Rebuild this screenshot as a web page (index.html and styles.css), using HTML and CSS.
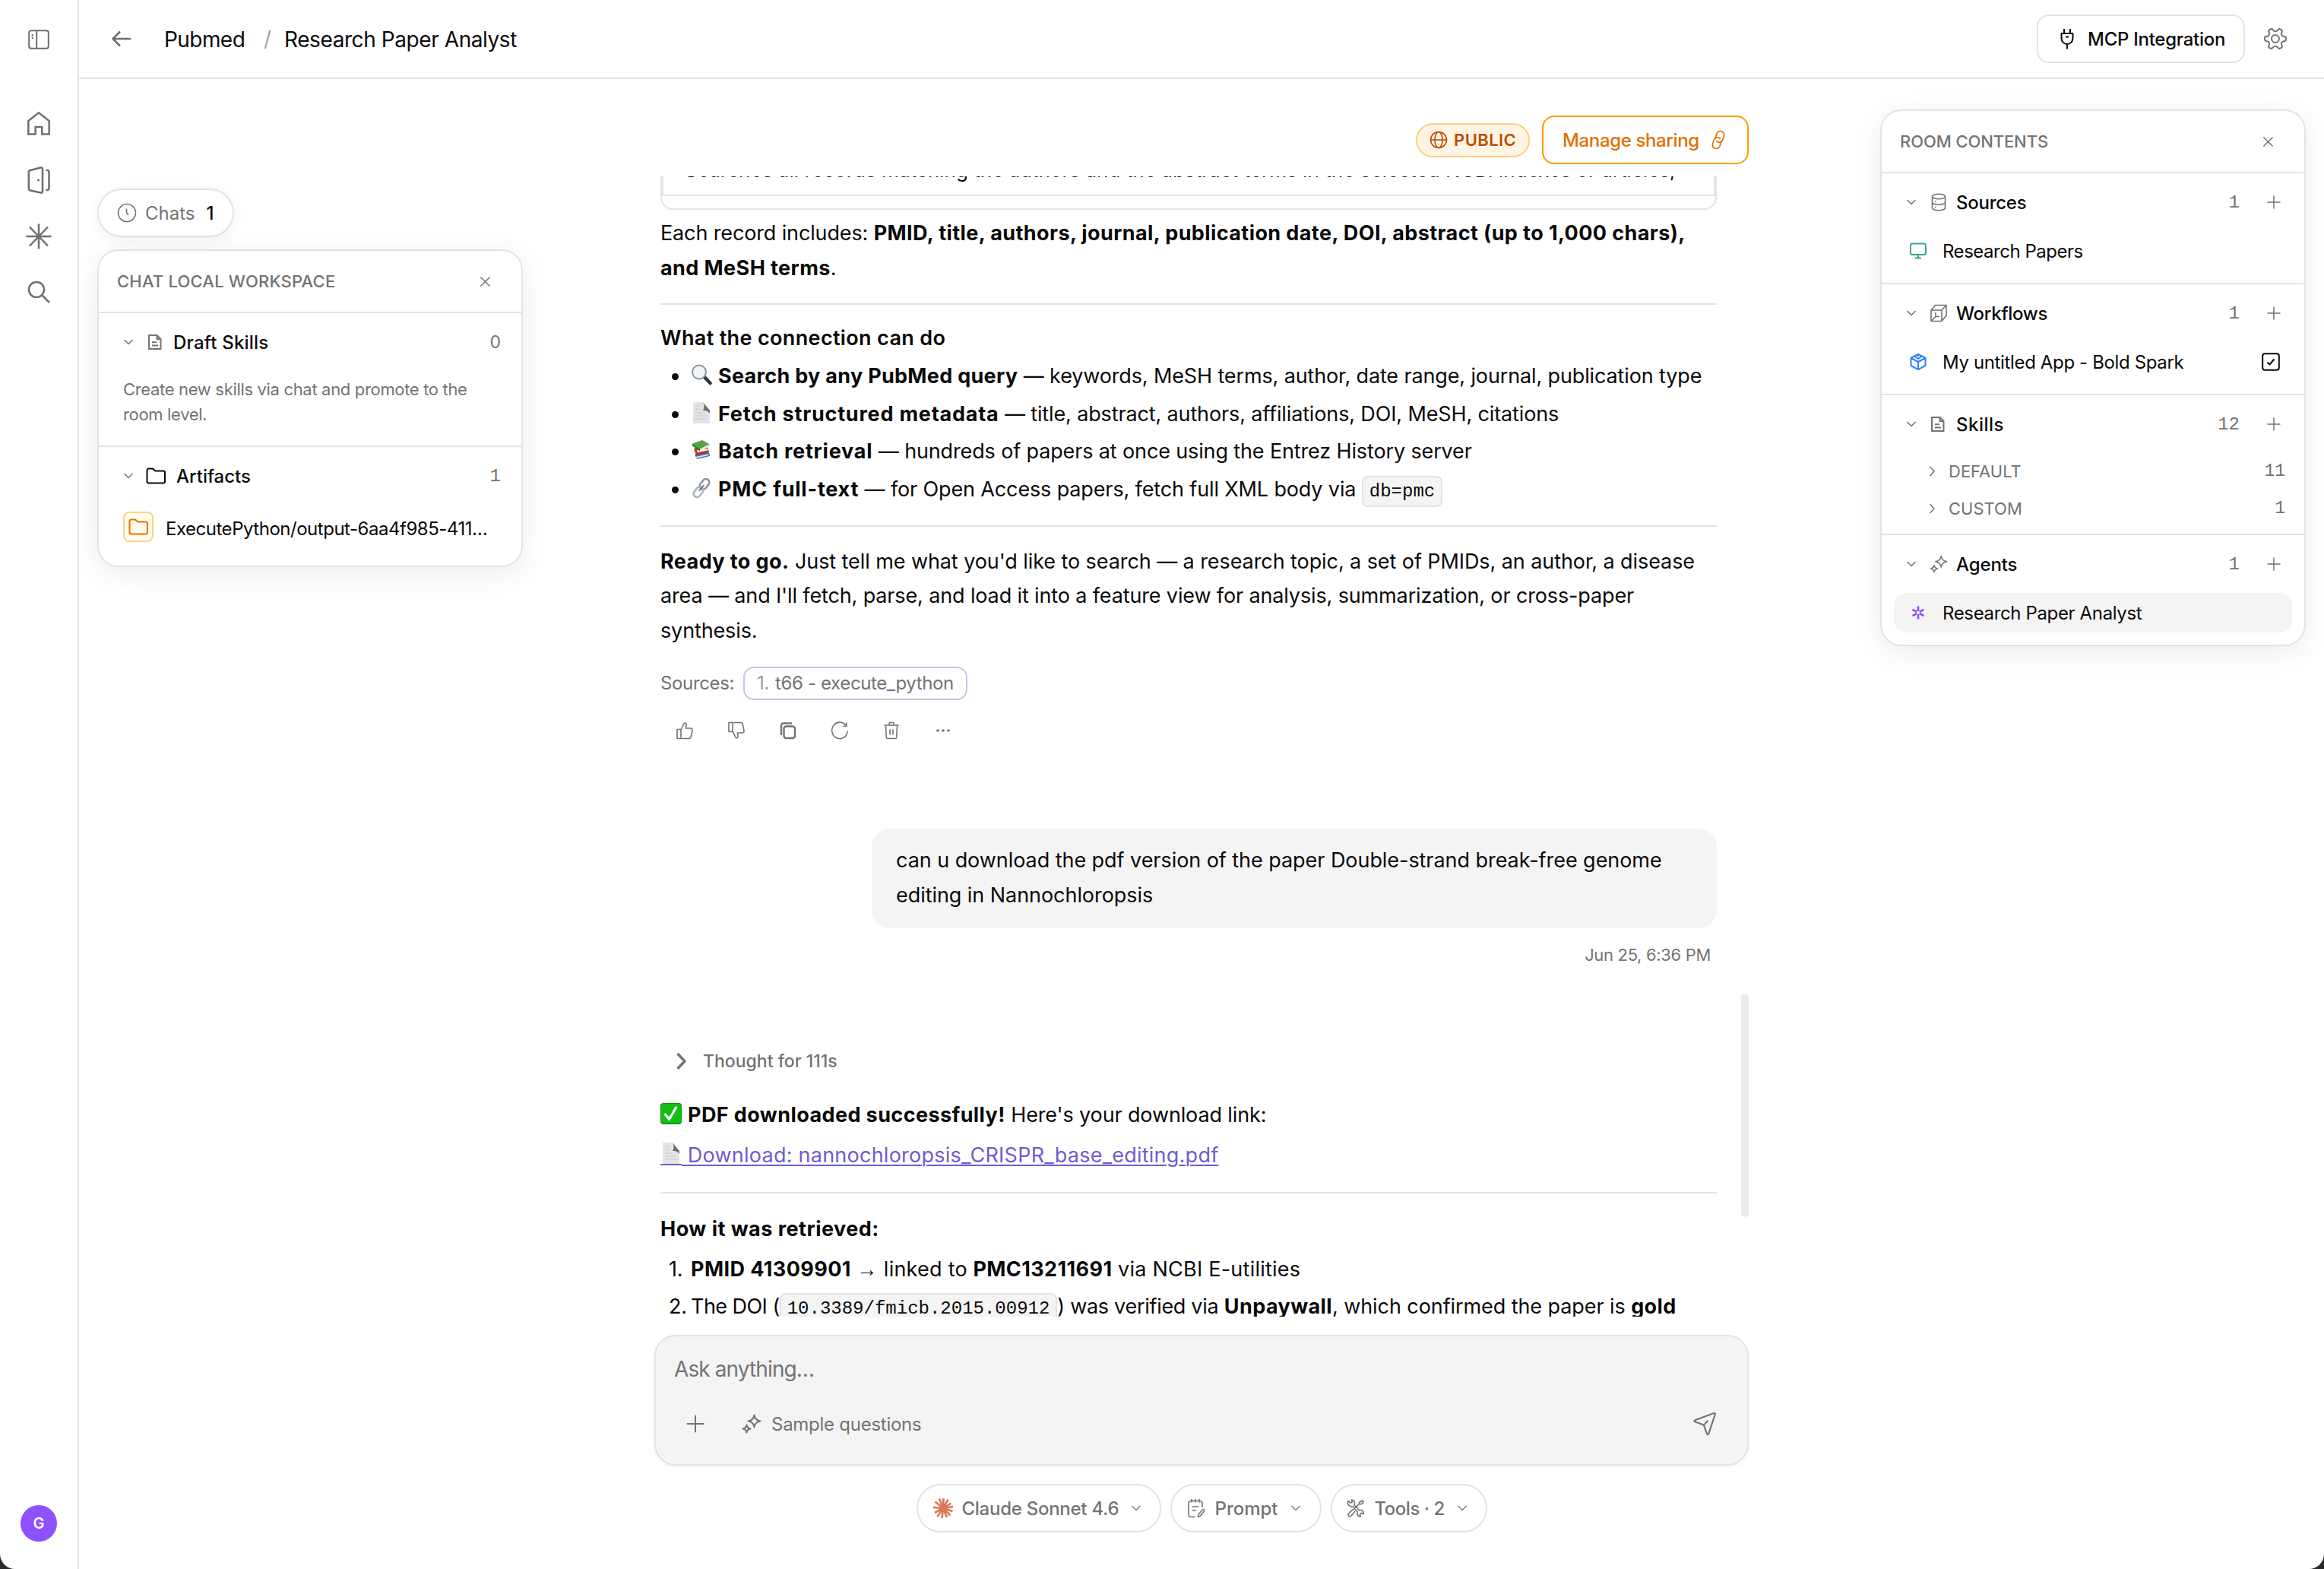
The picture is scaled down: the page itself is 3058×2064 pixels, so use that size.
FILE: index.html
```html
<!DOCTYPE html>
<html lang="en">
<head>
<meta charset="utf-8">
<title>Research Paper Analyst</title>
<link rel="stylesheet" href="styles.css">
</head>
<body>
<svg class="defs" aria-hidden="true">
  <symbol id="down" viewBox="0 0 16 16"><path d="M2.500 5l5.500 5.500L13.500 5" /></symbol>
  <symbol id="right" viewBox="0 0 16 16"><path d="M5.500 2L11 8l-5.500 6" /></symbol>
  <symbol id="close" viewBox="0 0 16 16"><path d="M1.500 1.500l13 13M14.500 1.500l-13 13" /></symbol>
  <symbol id="plus" viewBox="0 0 18 18"><path d="M9 0.500v17M0.500 9h17" /></symbol>
  <symbol id="doc" viewBox="0 0 20 22"><path d="M2 2h10.500l5 5v13H2zM12.500 2v5h5M6 11.200h6M6 15.500h8" /></symbol>
  <symbol id="folder" viewBox="0 0 28 24"><path d="M2.500 19.500V4.500a2 2 0 0 1 2-2h5.500l3.500 3h10.500a2 2 0 0 1 2 2v12a2 2 0 0 1-2 2h-19.500a2 2 0 0 1-2-2z" /></symbol>
  <symbol id="stars" viewBox="0 0 26 26"><path d="M16.500 1.500c.8 5 3 7.200 8 8-5 .8-7.200 3-8 8-.8-5-3-7.200-8-8 5-.8 7.200-3 8-8zM6.500 14.500c.5 3 2 4.500 5 5-3 .5-4.500 2-5 5-.5-3-2-4.500-5-5 3-.5 4.500-2 5-5z" /></symbol>
  <symbol id="page" viewBox="0 0 28 28"><path d="M3 0h13l9 12v16H3z" fill="#e4e4e4"/><path d="M16 0c2 3 2 7 0 11 3 0 7 .5 9 4V11z" fill="#6f6f6f"/><path d="M6 5h6M6 9h7M6 14h9M6 18h15M6 22h15" stroke="#c8c8c8" stroke-width="1.200"/></symbol>
</svg>
<div class="app">
  <aside class="rail">
    <nav class="rail-nav">
      <svg class="ri panel-ic" viewBox="0 0 32 32"><rect x="3.200" y="4.200" width="25.600" height="23.600" rx="3"/><path d="M13.200 4v24M7.700 9v2.500M7.700 12.800v2.500"/></svg>
      <svg class="ri home-ic" viewBox="0 0 32 32"><path d="M2.300 30.500V13L16 2.300 29.700 13v17.500H20.300V21h-8.600v9.500z"/></svg>
      <svg class="ri door-ic" viewBox="0 0 32 36"><path d="M4.800 5L18.500 1.500q2.500-.5 2.500 2v29q0 2.500-2.500 2L4.800 31.500q-2-.5-2-2.500V7.500q0-2 2-2.500zM25.500 5h1.500q2.500 0 2.500 2.500v21q0 2.500-2.500 2.500h-1.500"/><circle cx="15.500" cy="18" r="1.600" class="dot"/></svg>
      <svg class="ri star-ic" viewBox="0 0 36 36"><path d="M18 1.500v33M1.500 18h33M6 5.500l24 25M30 5.500l-24 25"/></svg>
      <svg class="ri find-ic" viewBox="0 0 32 32"><circle cx="13" cy="13" r="10"/><path d="M20.500 20.500l9.500 9.500"/></svg>
    </nav>
    <div class="avatar">G</div>
  </aside>
  <div class="main">
    <header class="top">
      <svg class="back" viewBox="0 0 28 24"><path d="M26 12H3M12 2.500L2.500 12l9.500 9.500"/></svg>
      <span class="crumb c1 n4">Pubmed</span><span class="slash">/</span><span class="crumb c2 n3">Research Paper Analyst</span>
      <button class="mcp"><svg viewBox="0 0 20 28"><path d="M6 1v6M14 1v6M2.500 7h15v6c0 5-3.500 8-7.500 8s-7.500-3-7.500-8zM10 21v6.500M8 11.500h4"/></svg><span class="n2">MCP Integration</span></button>
      <svg class="gear" viewBox="0 0 24 24"><g transform="rotate(90 12 12)"><path d="M12.220 2h-.44a2 2 0 0 0-2 2v.18a2 2 0 0 1-1 1.730l-.43.25a2 2 0 0 1-2 0l-.15-.08a2 2 0 0 0-2.730.73l-.22.38a2 2 0 0 0 .73 2.730l.15.1a2 2 0 0 1 1 1.720v.51a2 2 0 0 1-1 1.740l-.15.09a2 2 0 0 0-.73 2.730l.22.38a2 2 0 0 0 2.730.73l.15-.08a2 2 0 0 1 2 0l.43.25a2 2 0 0 1 1 1.730V20a2 2 0 0 0 2 2h.44a2 2 0 0 0 2-2v-.18a2 2 0 0 1 1-1.730l.43-.25a2 2 0 0 1 2 0l.15.08a2 2 0 0 0 2.730-.73l.22-.39a2 2 0 0 0-.73-2.730l-.15-.08a2 2 0 0 1-1-1.740v-.5a2 2 0 0 1 1-1.740l.15-.09a2 2 0 0 0 .73-2.730l-.22-.38a2 2 0 0 0-2.730-.73l-.15.08a2 2 0 0 1-2 0l-.43-.25a2 2 0 0 1-1-1.730V4a2 2 0 0 0-2-2z"/><circle cx="12" cy="12" r="3.500"/></g></svg>
    </header>
    <div class="body">
      <section class="left">
        <div class="chats"><svg viewBox="0 0 26 26"><circle cx="13" cy="13" r="11.500"/><path d="M12.500 7.500V13l2.500 3"/></svg><span class="lbl">Chats</span><b>1</b></div>
        <div class="card">
          <div class="card-h"><span class="w1">CHAT LOCAL WORKSPACE</span><svg class="x"><use href="#close"/></svg></div>
          <div class="sec drafts">
            <div class="row"><svg class="chev"><use href="#down"/></svg><svg class="doc"><use href="#doc"/></svg><span class="rt w1">Draft Skills</span><span class="num zero">0</span></div>
            <p class="hint n3">Create new skills via chat and promote to the<br>room level.</p>
          </div>
          <div class="sec">
            <div class="row"><svg class="chev"><use href="#down"/></svg><svg class="fold"><use href="#folder"/></svg><span class="rt">Artifacts</span><span class="num">1</span></div>
            <div class="file"><span class="tile"><svg><use href="#folder"/></svg></span><span class="fname n4">ExecutePython/output-6aa4f985-411…</span></div>
          </div>
        </div>
      </section>
      <section class="chat">
        <div class="share">
          <span class="public"><svg viewBox="0 0 24 24"><circle cx="12" cy="12" r="10.500"/><ellipse cx="12" cy="12" rx="5" ry="10.500"/><path d="M1.500 12h21"/></svg><span class="w2">PUBLIC</span></span>
          <button class="manage"><span class="n3">Manage sharing</span><svg viewBox="0 0 22 28"><g transform="rotate(18 11 14)"><path d="M7 14.500a5 5 0 0 1-.5-2.500V7a5 5 0 0 1 10 0v5a5 5 0 0 1-5 5q-1.800 0-2.500-1.500"/><path d="M15 13.500q.5 1 .5 2.500v5a5 5 0 0 1-10 0v-5a5 5 0 0 1 5-5q1.800 0 2.500 1.500"/></g></svg></button>
        </div>
        <div class="viewport">
          <div class="thread">
            <div class="table"><div class="cell"><span>Searches all records matching the authors and the abstract terms in the selected NCBI indexes or articles,</span></div></div>
            <p class="p p1">Each record includes: <b>PMID, title, authors, journal, publication date, DOI, abstract (up to 1,000 chars),</b><br><b>and MeSH terms</b>.</p>
            <hr>
            <h3 class="p h what">What the connection can do</h3>
            <ul>
              <li><svg class="emo" viewBox="0 0 28 28"><path d="M18 17l7.500 8" stroke="#333" stroke-width="4.500" stroke-linecap="round"/><circle cx="11" cy="10.500" r="9" fill="#eef3f7" stroke="#8e949b" stroke-width="2"/></svg><b class="tight">Search by any PubMed query</b> — keywords, MeSH terms, author, date range, journal, publication type</li>
              <li><svg class="emo"><use href="#page"/></svg><b>Fetch structured metadata</b> — title, abstract, authors, affiliations, DOI, MeSH, citations</li>
              <li><svg class="emo" viewBox="0 0 28 28"><path d="M5 20l19-3 1 5-17 4z" fill="#3c6fb5"/><path d="M6 23l17-3.500 .5 1.500-16 3.500z" fill="#eee"/><path d="M4 12l18-2 2 7-17 4z" fill="#c8281e"/><path d="M8 14l14-2 .5 2.500-14 3z" fill="#f3e9e6"/><path d="M2 5.500L15 1l10 5.500-13 6z" fill="#53a548"/><path d="M2 5.500l10 7v3l-10-7z" fill="#2f7a2c"/><path d="M12 12.500l13-6v2.500l-13 6.500z" fill="#e8f0e4"/></svg><b>Batch retrieval</b> — hundreds of papers at once using the Entrez History server</li>
              <li><svg class="emo" viewBox="0 0 28 28"><g transform="rotate(38 14 14)" fill="none"><rect x="9.500" y="0" width="9" height="15" rx="4.500" stroke="#8c949e" stroke-width="2.600"/><rect x="9.500" y="13" width="9" height="15" rx="4.500" stroke="#aab2bc" stroke-width="2.600"/><path d="M14 9v10" stroke="#767d86" stroke-width="2"/></g></svg><b>PMC full-text</b> — for Open Access papers, fetch full XML body via <code>db=pmc</code></li>
            </ul>
            <hr>
            <p class="p p2"><b>Ready to go.</b> <span class="n0">Just tell me what you'd like to search — a research topic, a set of PMIDs, an author, a disease</span><br>area — and I'll fetch, parse, and load it into a feature view for analysis, summarization, or cross-paper<br>synthesis.</p>
            <div class="srcs n3"><span class="sl">Sources:</span><span class="chip"><i>1.</i><span>t66 - execute_python</span></span></div>
            <div class="acts">
              <svg viewBox="0 0 24 24"><path d="M2 10.500h5v12H2zM7 11l4.500-9c2 0 3 1.500 2.500 3.500L13.200 9H20q2.500.3 2 2.800l-1.800 8.700q-.4 2-2.500 2H7"/></svg>
              <svg viewBox="0 0 24 24"><path d="M2 1.500h5v12H2zM7 13l4.500 9c2 0 3-1.500 2.500-3.500L13.200 15H20q2.500-.3 2-2.800l-1.800-8.700q-.4-2-2.500-2H7"/></svg>
              <svg viewBox="0 0 24 24" class="thick"><rect x="6.500" y="6.500" width="14.500" height="15.500" rx="3"/><path d="M3 18V5.500Q3 2.500 6 2.500h11"/></svg>
              <svg viewBox="0 0 24 24"><path d="M20.500 5.800A10.300 10.800 0 1 0 22.300 12.500M20.800 1.500v4.800h-4.300"/></svg>
              <svg viewBox="0 0 24 24"><path d="M2.500 5h19M8.500 5l1-3.500h5L15.500 5M4.500 5l.7 15.500q.1 2 2 2h9.600q1.900 0 2-2L19.500 5M10 10.500v7M14 10.500v7"/></svg>
              <svg viewBox="0 0 24 24" class="dots"><circle cx="5" cy="12" r="1.800"/><circle cx="12" cy="12" r="1.800"/><circle cx="19" cy="12" r="1.800"/></svg>
            </div>
            <div class="bubble">can u download the pdf version of the paper Double-strand break-free genome<br>editing in Nannochloropsis</div>
            <div class="time n3">Jun 25, 6:36 PM</div>
            <div class="thought"><svg viewBox="0 0 16 24"><path d="M2.500 2L12 12l-9.500 10"/></svg><span>Thought for 111s</span></div>
            <p class="p p3"><svg class="emo" viewBox="0 0 28 28"><rect width="28" height="28" rx="4" fill="#0a9a0a"/><rect x="1" y="1" width="26" height="25" rx="3.500" fill="#14bf14"/><path d="M6.500 15l5 6.500L20.500 6" fill="none" stroke="#fff" stroke-width="3.200" stroke-linecap="round" stroke-linejoin="round"/></svg><b>PDF downloaded successfully!</b> Here's your download link:</p>
            <p class="p p4"><a class="w1"><svg class="emo"><use href="#page"/></svg> Download: nannochloropsis_CRISPR_base_editing.pdf</a></p>
            <hr>
            <h3 class="p h how">How it was retrieved:</h3>
            <ol>
              <li><i>1.</i><b>PMID 41309901</b> <span class="arrow">→</span> <span class="w1">linked to</span> <b>PMC13211691</b> <span class="w1">via NCBI E-utilities</span></li>
              <li><i>2.</i><span class="n4">The DOI (</span><code>10.3389/fmicb.2015.00912</code><span class="n2">) was verified via</span> <b>Unpaywall</b><span class="n0">, which confirmed the paper is</span> <b>gold</b></li>
            </ol>
          </div>
          <div class="thumb"></div>
        </div>
        <div class="ask">
          <div class="ph n5">Ask anything…</div>
          <div class="bar"><svg class="add"><use href="#plus"/></svg><svg class="sp"><use href="#stars"/></svg><span class="sq n2">Sample questions</span><svg class="send" viewBox="0 0 30 30"><path d="M3 10.500L26 2q2.500-.7 1.800 1.800L20 27q-1 2.500-2.300.2L14 16.500 3 12.500q-2-1 0-2zM14 16.500l5-5.500"/></svg></div>
        </div>
        <div class="pills">
          <button class="pill k1"><svg class="claude" viewBox="0 0 28 28"><path d="M14 14L14.500 1M14 14L9 1.500M14 14L20.500 2.500M14 14L3.500 5.500M14 14L24.500 7.500M14 14L1 13M14 14L27 12M14 14L3 20M14 14L26.500 18M14 14L6.500 25M14 14L23.500 23.500M14 14L12.500 27M14 14L19 26"/></svg><span class="n2">Claude Sonnet 4.6</span><svg class="chev"><use href="#down"/></svg></button>
          <button class="pill k2"><svg class="note" viewBox="0 0 24 26"><path d="M10.500 24.500H5q-3 0-3-3V6.500q0-3 3-3h12q3 0 3 3V12M6 1v4.500M11 1v4.500M16 1v4.500M6.500 11h9M6.500 16h5.500M14.500 24.500l.3-3 5.500-6.500q1-1 2 0 .8 1-.1 2.200L17 23.500z"/></svg><span>Prompt</span><svg class="chev"><use href="#down"/></svg></button>
          <button class="pill k3"><svg class="tool" viewBox="0 0 24 24"><path d="M1.800 2.500l3.400 2.500 2-1L6.500 1q3.500.3 4 4 0 1.500-.5 2.500L16.500 15q1.500-.8 3-.2 3 1.200 2.700 5l-2.800-1.300-1.900 1.500.8 2.900q-3.800.2-4.500-3.900 0-1 .4-2L8 9.500q-3.500 1-5.500-1.500Q.8 5.500 1.800 2.500zM21.500 1.500l-5 3v2L3 18.500q-2 2-.3 3.800 1.800 1.600 3.500-.5L11 16M17.500 7l3-1 2-3.500M12.500 10.500l4-4.500"/></svg><span class="n4">Tools · 2</span><svg class="chev"><use href="#down"/></svg></button>
        </div>
      </section>
      <section class="rightc">
        <div class="card">
          <div class="card-h"><span class="n1">ROOM CONTENTS</span><svg class="x"><use href="#close"/></svg></div>
          <div class="sec s-a">
            <div class="row"><svg class="chev"><use href="#down"/></svg><svg class="ric" viewBox="0 0 22 24"><ellipse cx="11" cy="4.500" rx="8.500" ry="3.300"/><path d="M2.500 4.500v15c0 1.800 3.800 3.300 8.500 3.300s8.500-1.500 8.500-3.300v-15M2.500 12c0 1.800 3.800 3.300 8.500 3.300s8.500-1.500 8.500-3.300M6 11h1.500M6 18.500h1.500"/></svg><span class="rt n2">Sources</span><span class="num">1</span><svg class="pl"><use href="#plus"/></svg></div>
            <div class="item"><svg class="green" viewBox="0 0 24 24"><rect x="2" y="2.500" width="20" height="14.500" rx="2.500"/><path d="M12 17v4M8 21.500h8"/></svg><span class="n4">Research Papers</span></div>
          </div>
          <div class="sec s-b">
            <div class="row"><svg class="chev"><use href="#down"/></svg><svg class="ric" viewBox="0 0 24 24"><path d="M2 8h14v14.500H2zM2 8l5.500-6.500H22L16 8M22 1.500V15l-6 7.500M2 22.500l6-6M8 11v5.500h5"/></svg><span class="rt n2">Workflows</span><span class="num">1</span><svg class="pl"><use href="#plus"/></svg></div>
            <div class="item"><svg class="blue" viewBox="0 0 24 24"><path d="M12 1.800L21.500 7v10L12 22.200 2.500 17V7zM2.500 7L12 12l9.500-5M12 12v10M12 1.800V5M7 4.500L12 8l5-3.500"/></svg><span class="n3">My untitled App - Bold Spark</span><svg class="check" viewBox="0 0 24 24"><rect x="1.200" y="1.200" width="21.600" height="21.600" rx="3"/><path d="M7.500 12.500l3 3L16.500 8.500"/></svg></div>
          </div>
          <div class="sec s-c">
            <div class="row"><svg class="chev"><use href="#down"/></svg><svg class="doc"><use href="#doc"/></svg><span class="rt w2">Skills</span><span class="num">12</span><svg class="pl"><use href="#plus"/></svg></div>
            <div class="sub"><svg class="chev"><use href="#right"/></svg><span>DEFAULT</span><span class="num">11</span></div>
            <div class="sub"><svg class="chev"><use href="#right"/></svg><span>CUSTOM</span><span class="num">1</span></div>
          </div>
          <div class="sec s-d">
            <div class="row"><svg class="chev"><use href="#down"/></svg><svg class="ric"><use href="#stars"/></svg><span class="rt n1">Agents</span><span class="num">1</span><svg class="pl"><use href="#plus"/></svg></div>
            <div class="item on"><svg class="violet" viewBox="0 0 24 24"><path d="M12 3.500v6.500M12 14v6.500M4.600 7.800l5.600 3.200M13.800 13l5.600 3.200M19.400 7.800l-5.600 3.200M10.200 13l-5.600 3.200"/></svg><span class="n3">Research Paper Analyst</span></div>
          </div>
        </div>
      </section>
    </div>
  </div>
</div>
</body>
</html>
```

FILE: styles.css
```css
* { box-sizing: border-box; }
html, body { margin: 0; height: 100%; }
body { background: #2b2b2b; font-family: Inter, "Liberation Sans", sans-serif; color: #0a0a0a; font-size: 24px; }
svg { fill: none; stroke: currentColor; stroke-width: 2; flex: none; display: block; stroke-linejoin: round; }
.defs { position: absolute; width: 0; height: 0; }
button { font: inherit; color: inherit; background: #fff; cursor: pointer; }
hr { border: 0; height: 2px; background: #e3e3e3; margin: 0; }
b { font-weight: 700; }
h3 { font-weight: 600; }
i { font-style: normal; }

/* tracking steps */
.n0 { letter-spacing: -.003em; }
.n1 { letter-spacing: -.005em; }
.n2 { letter-spacing: -.011em; }
.n3 { letter-spacing: -.015em; }
.n4 { letter-spacing: -.02em; }
.n5 { letter-spacing: -.032em; }
.w1 { letter-spacing: .009em; }
.w2 { letter-spacing: .02em; }

.app { display: flex; width: 3058px; height: 2064px; background: #fff; border-radius: 0 0 20px 20px; overflow: hidden; }
.rail { width: 104px; border-right: 2px solid #e3e3e3; display: flex; flex-direction: column; justify-content: space-between; align-items: center; padding: 36px 0; color: #6f6f6f; }
.rail-nav { display: flex; flex-direction: column; align-items: center; }
.ri { stroke-width: 2.5; }
.panel-ic, .home-ic, .find-ic { width: 32px; height: 32px; }
.panel-ic { stroke-width: 2; }
.home-ic { margin-top: 78px; stroke-linejoin: miter; }
.door-ic { width: 32px; height: 36px; margin-top: 41px; }
.dot { fill: currentColor; stroke: none; }
.star-ic { width: 36px; height: 36px; margin-top: 38px; }
.find-ic { margin-top: 39px; }
.avatar { width: 48px; height: 48px; border-radius: 50%; background: #8e51ff; color: #fff; font-size: 20px; font-weight: 600; line-height: 48px; text-align: center; }

.main { flex: 1; display: flex; flex-direction: column; }
.top { height: 104px; border-bottom: 2px solid #e3e3e3; display: flex; align-items: center; padding: 0 48px 0 42px; }
.back { width: 28px; height: 24px; stroke-width: 2.500; color: #6f6f6f; }
.crumb { font-size: 28px; white-space: nowrap; padding-top: 1px; }
.c1 { margin-left: 42px; width: 108px; }
.slash { font-size: 28px; color: #a3a3a3; margin: 0 15px 0 23px; width: 12px; }
.mcp { margin-left: auto; width: 274px; height: 64px; border: 2px solid #e3e3e3; border-radius: 16px; display: flex; align-items: center; padding: 0 0 0 28px; gap: 17px; font-size: 24px; font-weight: 500; white-space: nowrap; }
.mcp svg { width: 20px; height: 28px; }
.gear { width: 34px; height: 34px; margin-left: 23px; margin-right: -1px; color: #737373; stroke-width: 1.400; }

.body { flex: 1; display: flex; justify-content: space-between; padding: 0 24px; }
.left { width: 560px; padding-top: 144px; }
.rightc { width: 560px; padding-top: 40px; }
.chat { width: 1440px; padding-top: 48px; }
.chats { width: 180px; height: 64px; border: 2px solid #e3e3e3; border-radius: 32px; display: flex; align-items: center; padding-left: 24px; color: #737373; box-shadow: 0 4px 20px rgba(0,0,0,.06); margin-bottom: 16px; }
.chats svg { width: 26px; height: 26px; stroke-width: 1.600; margin-right: 11px; }
.chats b { color: #0a0a0a; font-weight: 500; margin-left: 15px; }
.card { border: 2px solid #e3e3e3; border-radius: 28px; background: #fff; box-shadow: 0 8px 40px rgba(0,0,0,.08); overflow: hidden; white-space: nowrap; }
.card-h { height: 82px; border-bottom: 2px solid #e3e3e3; display: flex; align-items: center; justify-content: space-between; padding: 0 40px 0 24px; font-size: 22px; font-weight: 500; color: #737373; }
.x { width: 15px; height: 15px; stroke-width: 1.600; }
.row { height: 40px; display: flex; align-items: center; padding-left: 31px; font-weight: 500; }
.chev { width: 16px; height: 16px; stroke-width: 1.500; color: #737373; }
.row .doc { width: 20px; height: 22px; margin-left: 17px; color: #737373; }
.row .doc + .rt { margin-left: 14px; }
.fold { width: 28px; height: 24px; margin-left: 14px; }
.fold + .rt { margin-left: 13px; }
.num { margin-left: auto; color: #737373; font: 24px "Liberation Mono", monospace; }
.num.zero { font-family: Inter, sans-serif; font-size: 23px; }
.left .row { padding-right: 27px; }
.sec + .sec { border-top: 2px solid #e3e3e3; }
.left .sec { padding-top: 18px; }
.drafts { height: 174px; }
.hint { margin: 26px 0 0 32px; font-size: 22px; line-height: 33px; color: #737373; }
.file { display: flex; align-items: center; margin: 27px 0 31px 32px; }
.tile { width: 40px; height: 40px; border: 2px solid #ffd188; border-radius: 8px; background: #fffbeb; display: grid; place-items: center; color: #e17100; }
.tile svg { width: 28px; height: 24px; }
.fname { margin-left: 16px; padding-top: 4px; }

.share { height: 64px; display: flex; justify-content: flex-end; align-items: center; gap: 16px; white-space: nowrap; }
.public { width: 150px; height: 45px; border: 2px solid #ffcf80; border-radius: 23px; background: #fff4e4; color: #bb4d00; display: flex; align-items: center; padding-left: 16px; gap: 8px; font-size: 22px; font-weight: 600; }
.public svg { width: 24px; height: 24px; stroke-width: 1.600; }
.manage { width: 272px; height: 64px; border: 2px solid #fe9a00; border-radius: 16px; color: #e17100; display: flex; align-items: center; justify-content: space-between; padding: 0 27px 0 25px; font-weight: 500; }
.manage svg { width: 22px; height: 28px; stroke-width: 1.700; }

.viewport { display: flex; height: 1500px; margin-top: 16px; overflow: hidden; }
.thread { width: 1390px; margin-left: 8px; font-size: 27px; line-height: 45.5px; white-space: nowrap; letter-spacing: -.005em; }
.thumb { width: 10px; height: 294px; border-radius: 5px; background: #ebebeb; margin: 1075px 0 0 32px; }
.table { height: 44px; border: 2px solid #e3e3e3; border-top: 0; border-radius: 0 0 16px 16px; padding-bottom: 16px; }
.cell { height: 26px; border: 2px solid #e3e3e3; border-top: 0; padding-left: 28px; font-size: 26px; line-height: 40px; overflow: hidden; letter-spacing: .0016em; }
.cell span { display: block; margin-top: -28px; }
.p { margin: 0; font-size: 27px; }
.p1 { margin: 8px 0 24px; }
.h { margin: 21px 0 0; }
.what { letter-spacing: .013em; }
.how { font-weight: 700; letter-spacing: .018em; }
ul, ol { list-style: none; margin: 0; padding: 0; display: flex; flex-direction: column; gap: 4px; }
ul { margin: 4.500px 0 24.500px; }
li { height: 45.500px; }
li b, .p b { letter-spacing: .015em; }
ul b { letter-spacing: .029em; }
ul b.tight { letter-spacing: .011em; }
ul li { padding-left: 40px; position: relative; }
ul li::before { content: ""; position: absolute; left: 15px; top: 19px; width: 9px; height: 9px; border-radius: 50%; background: #0a0a0a; }
.emo { display: inline-block; width: 28px; height: 28px; vertical-align: -3px; margin-right: 8px; stroke: none; }
code { font: 24px/30px "Liberation Mono", monospace; letter-spacing: 0; border: 2px solid #e3e3e3; border-radius: 8px; background: #f4f4f4; padding: 5px 8px; }
.p2 { margin: 23px 0 25px; }
.srcs { height: 44px; display: flex; align-items: center; font-size: 24px; color: #737373; }
.chip { width: 295px; height: 44px; border: 2px solid #c9c4ea; border-radius: 14px; margin-left: 12px; padding-left: 16px; line-height: 40px; display: flex; gap: 8px; }
.chip i { color: #9a9a9a; }
.acts { display: flex; gap: 44px; margin: 28px 0 117px 20px; color: #737373; }
.acts svg { width: 24px; height: 24px; stroke-width: 1.600; }
.acts .thick { stroke-width: 2.400; }
.acts .dots { fill: currentColor; stroke: none; }
.bubble { width: 1112px; height: 131px; margin-left: auto; background: #f4f4f4; border-radius: 24px; padding: 19px 32px; letter-spacing: -.002em; }
.time { margin-top: 19px; padding-right: 8px; text-align: right; font-size: 22px; line-height: 32px; color: #737373; }
.thought { margin: 104px 0 28px 20px; display: flex; align-items: center; gap: 20px; font-size: 23px; line-height: 40px; color: #737373; font-weight: 500; letter-spacing: 0; }
.thought svg { width: 16px; height: 24px; stroke-width: 3.500; }
.p4 { margin: 7.500px 0 25.500px; }
.p4 a { color: #6d5dd3; text-decoration: underline; text-underline-offset: 3px; text-decoration-thickness: 2px; }
.p4 .emo { height: 30px; margin: 0; vertical-align: -4px; border-bottom: 2px solid #6d5dd3; }
hr + .how { margin-top: 23.500px; }
ol { margin-top: 7.500px; }
ol li { padding-left: 11px; }
ol li i { display: inline-block; width: 29px; }
.arrow { font-family: "Liberation Sans", sans-serif; line-height: 1; letter-spacing: .04em; }

.ask { height: 172px; margin-top: 24px; border: 2px solid #e3e3e3; border-radius: 28px; background: #f4f4f4; color: #737373; box-shadow: 0 2px 6px rgba(0,0,0,.05); }
.ph { font-size: 28px; line-height: 40px; padding: 23px 0 0 24px; }
.bar { display: flex; align-items: center; height: 40px; margin: 32px 40px 0 40px; white-space: nowrap; }
.add { width: 24px; height: 24px; stroke-width: 1.500; }
.sp { width: 26px; height: 26px; margin: 0 13px 0 49px; }
.send { width: 32px; height: 32px; margin-left: auto; }
.pills { display: flex; justify-content: center; gap: 12px; margin-top: 24px; }
.pill { height: 64px; border: 2px solid #e3e3e3; border-radius: 32px; display: flex; align-items: center; padding: 0 0 0 19px; font-weight: 500; color: #737373; white-space: nowrap; }
.k1 { width: 322px; } .k2 { width: 199px; padding-left: 20px; } .k3 { width: 206px; }
.pill .chev { margin-left: 15px; stroke-width: 1.200; }
.claude { width: 28px; height: 28px; color: #d97757; stroke-width: 2.600; margin-right: 11px; }
.note { width: 24px; height: 26px; stroke-width: 1.600; margin-right: 13px; }
.tool { width: 24px; height: 24px; stroke-width: 1.600; margin-right: 13px; }

.rightc .row { padding-left: 31px; padding-right: 31px; }
.ric { width: 24px; height: 24px; margin: 0 11px 0 16px; stroke-width: 1.600; color: #737373; }
.pl { width: 18px; height: 18px; margin-left: 36px; stroke-width: 1.500; color: #737373; }
.rightc .sec { padding-top: 18px; }
.s-a { height: 144px; }
.s-b, .s-d { height: 146px; }
.s-c { height: 184px; }
.item { height: 52px; margin: 18px 16px 0; padding-left: 20px; border-radius: 16px; display: flex; align-items: center; }
.item.on { background: #f4f4f4; }
.item > svg { width: 24px; height: 24px; margin-right: 20px; }
.item .check { margin: 0 16px 0 auto; color: #0a0a0a; }
.green { color: #3aa981; }
.blue { color: #2b7fff; }
.violet { color: #8e51ff; stroke-width: 2.600; }
.sub { height: 49px; display: flex; align-items: center; padding: 0 25px 0 58px; font-size: 22px; color: #737373; }
.sub .chev { margin-right: 14px; }
.sub .num { font-size: 23px; }
.row + .sub { margin-top: 17px; }
```
